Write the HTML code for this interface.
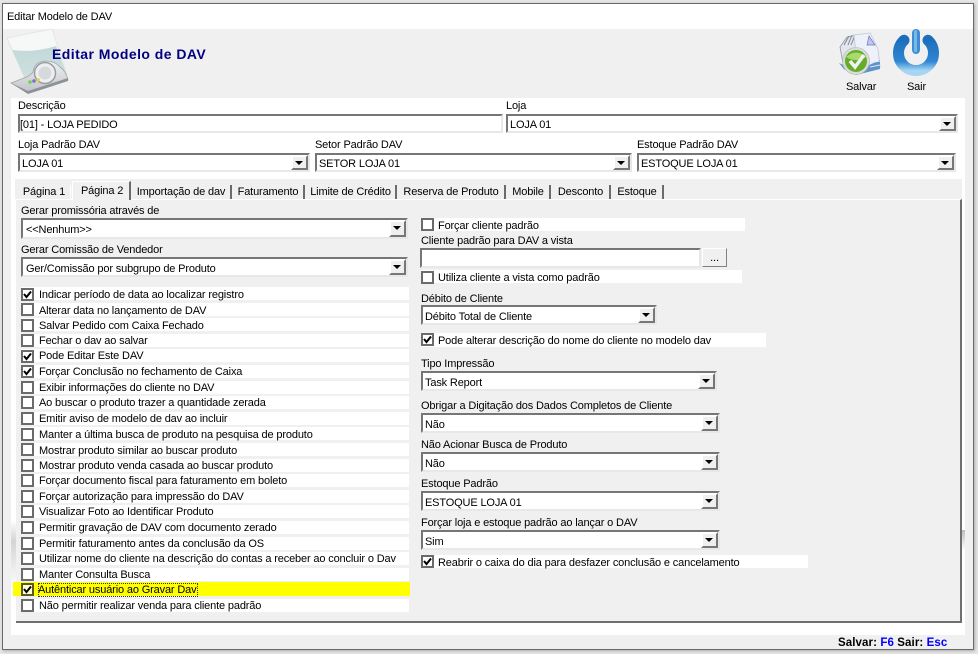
<!DOCTYPE html>
<html><head><meta charset="utf-8"><title>Editar Modelo de DAV</title>
<style>
html,body{margin:0;padding:0;background:#e4e4e4}
#w{position:relative;width:978px;height:654px;overflow:hidden;font:11px/14px "Liberation Sans",sans-serif;letter-spacing:-.15px;color:#000;background:#e6e6e6}
#w div,#w span,#w svg{position:absolute;box-sizing:border-box;white-space:nowrap}
.t{height:14px;margin-top:1px}
.r{background:#fff;height:13px;width:388px;left:21px}
.c{left:21px;width:13px;height:13px;background:#fff;border:2px solid #6b6b6b}
.c svg{left:0;top:0}
.l{left:39px}
.e{background:#fff;border:2px solid;border-color:#767676 #e8e8e8 #e8e8e8 #767676}
.e span{left:2px;top:2px}
.b{width:17px;background:#efefef;border:2px solid;border-color:#fff #777 #777 #fff;top:0;bottom:0;right:0}
.b:after{content:"";position:absolute;left:2px;top:4px;border:4px solid transparent;border-bottom:0;border-top:4px solid #000;border-left-width:4.5px;border-right-width:4.5px}
.tab{top:185px;height:14px;border-right:2px solid #6b6b6b;text-align:center;line-height:14px}
</style></head><body>
<div id="w">
<div style="left:2px;top:3px;width:972px;height:647px;background:#f0f0f0;border:1px solid #696969;box-shadow:1px 1px 3px #aaa"></div>
<div style="left:3px;top:4px;width:970px;height:25px;background:#fff"></div>
<div class="t" style="left:7px;top:9px">Editar Modelo de DAV</div>

<svg style="left:0;top:25px" width="80" height="75" viewBox="0 0 80 75">
<defs><linearGradient id="tl" x1="0" y1="0" x2="0" y2="1"><stop offset="0" stop-color="#c2d9d9"/><stop offset="1" stop-color="#cfe0e0"/></linearGradient>
<linearGradient id="bs" x1="0" y1="0" x2="0" y2="1"><stop offset="0" stop-color="#f0f1f2"/><stop offset="1" stop-color="#c0c3c6"/></linearGradient></defs>
<path d="M7 13 52 4 67 50 26 56Z" fill="#f6f8f8" stroke="#dfe4e4" stroke-width=".8"/>
<path d="M12 25Q34 28 56 21L67 50 26 56Z" fill="url(#tl)"/>
<path d="M11 58 24 53Q30 51 33 47 34 37 45 36 55 36 60 42 66 46 68 55 50 62 28 68Z" fill="url(#bs)" stroke="#a2a6aa" stroke-width=".8"/>
<path d="M11 58 28 66 68 53 68 56 28 69Z" fill="#8e9296"/>
<circle cx="45" cy="48" r="10.500" fill="#eceeef" stroke="#9a9ea2" stroke-width="1.500"/>
<circle cx="45" cy="48" r="6.500" fill="#d6d9db"/>
<circle cx="30" cy="57" r="1.800" fill="#6fcf5a"/><circle cx="34" cy="56" r="1.800" fill="#7073cc"/><circle cx="38" cy="55" r="1.800" fill="#e0d040"/>
</svg>
<div style="left:52px;top:46px;font:bold 14px/16px 'Liberation Sans',sans-serif;color:#000080;letter-spacing:.45px">Editar Modelo de DAV</div>

<svg style="left:830px;top:25px" width="55" height="55" viewBox="0 0 55 55">
<path d="M10 22 17 12 28 10 30 38 14 44Z" fill="#e3e6ec" stroke="#8f98a8" stroke-width=".8"/>
<path d="M14 20 19 11M18 20 22 10M21 20 25 10" stroke="#7d8694" stroke-width="1"/>
<path d="M24 10 40 8 48 24 50 42 28 46Z" fill="#eef1f9" stroke="#bcc4d8" stroke-width=".8"/>
<path d="M39 11 45 20 37 20Z" fill="#c2c6ec" stroke="#6f74c4" stroke-width=".7"/>
<path d="M9 38 14 44 26 50 50 44 50 35 48 36 26 46Z" fill="#5c93c9"/>
<path d="M40 38 50 36M40 42 50 40" stroke="#dfe8f4" stroke-width="1"/>
<circle cx="26" cy="36" r="13.500" fill="#d9dbd9" stroke="#b2b5b2" stroke-width=".6"/>
<circle cx="26" cy="36" r="11" fill="#64ad2a"/>
<path d="M16 32Q26 23 36 32 26 38 16 32Z" fill="#a9da6c"/>
<path d="M20 36 25 42 34 30" fill="none" stroke="#f2f2f2" stroke-width="3.500"/>
</svg>
<div class="t" style="left:846px;top:79px">Salvar</div>

<svg style="left:890px;top:26px" width="52" height="54" viewBox="0 0 52 54">
<defs><linearGradient id="p" x1="0" y1="0" x2="0" y2="1"><stop offset="0" stop-color="#1c6fbc"/><stop offset=".7" stop-color="#2f86d2"/><stop offset="1" stop-color="#a6d6f4"/></linearGradient></defs>
<path d="M14 14.300A17.500 17.500 0 1 0 38 14.300" fill="none" stroke="url(#p)" stroke-width="11" stroke-linecap="round"/>
<rect x="22" y="3" width="8" height="25" rx="4" fill="#3d8ed4"/>
<rect x="24" y="4" width="3" height="22" rx="1.500" fill="#7ab7e7"/>
</svg>
<div class="t" style="left:907px;top:79px">Sair</div>

<div style="left:11px;top:98px;width:954px;height:537px;background:#fff"></div>
<div style="left:962px;top:530px;width:3px;height:20px;background:linear-gradient(#bcbcbc,#fff)"></div>
<div style="left:11px;top:520px;width:5px;height:70px;background:linear-gradient(#fff,#d4d4d4 30%,#fff)"></div>

<div class="t" style="left:18px;top:98px">Descrição</div>
<div class="e" style="left:18px;top:114px;width:485px;height:19px"><span style="left:0">[01] - LOJA PEDIDO</span></div>
<div class="t" style="left:506px;top:98px">Loja</div>
<div class="e" style="left:506px;top:114px;width:452px;height:19px"><span>LOJA 01</span><div class="b"></div></div>

<div class="t" style="left:18px;top:137px">Loja Padrão DAV</div>
<div class="e" style="left:18px;top:153px;width:292px;height:19px"><span>LOJA 01</span><div class="b"></div></div>
<div class="t" style="left:315px;top:137px">Setor Padrão DAV</div>
<div class="e" style="left:315px;top:153px;width:317px;height:19px"><span>SETOR LOJA 01</span><div class="b"></div></div>
<div class="t" style="left:637px;top:137px">Estoque Padrão DAV</div>
<div class="e" style="left:637px;top:153px;width:319px;height:19px"><span>ESTOQUE LOJA 01</span><div class="b"></div></div>

<div style="left:15px;top:179px;width:947px;height:20px;background:#f0f0f0"></div>
<div style="left:16px;top:199px;width:946px;height:424px;background:#f0f0f0;border-top:1px solid #fff;border-right:2px solid #6f6f6f;border-bottom:2px solid #6f6f6f"></div>
<div style="left:72px;top:181px;width:59px;height:19px;background:#f0f0f0;border-left:1px solid #fff;border-top:1px solid #fff;border-right:2px solid #6b6b6b"></div>

<div class="tab" style="left:18px;width:53px;border-right:1px solid #fff">Página 1</div>
<div class="t" style="left:81px;top:183px">Página 2</div>
<div class="tab" style="left:132px;width:100px">Importação de dav</div>
<div class="tab" style="left:233px;width:72px">Faturamento</div>
<div class="tab" style="left:306px;width:91px">Limite de Crédito</div>
<div class="tab" style="left:398px;width:108px">Reserva de Produto</div>
<div class="tab" style="left:507px;width:44px">Mobile</div>
<div class="tab" style="left:552px;width:59px">Desconto</div>
<div class="tab" style="left:612px;width:52px">Estoque</div>

<div class="t" style="left:21px;top:203px">Gerar promissória através de</div>
<div class="e" style="left:21px;top:218px;width:387px;height:21px"><span style="left:3px;top:3px">&lt;&lt;Nenhum&gt;&gt;</span><div class="b"></div></div>
<div class="t" style="left:21px;top:242px">Gerar Comissão de Vendedor</div>
<div class="e" style="left:21px;top:257px;width:387px;height:20px"><span style="left:3px;top:3px">Ger/Comissão por subgrupo de Produto</span><div class="b"></div></div>

<div class="r" style="top:287px"></div><div class="c" style="top:288px"><svg width="9" height="9"><path d="M1 4 3.500 7 8 1.500" fill="none" stroke="#000" stroke-width="2"/></svg></div><div class="t l" style="top:287px">Indicar período de data ao localizar registro</div>
<div class="r" style="top:303px"></div><div class="c" style="top:303px"></div><div class="t l" style="top:303px">Alterar data no lançamento de DAV</div>
<div class="r" style="top:318px"></div><div class="c" style="top:319px"></div><div class="t l" style="top:318px">Salvar Pedido com Caixa Fechado</div>
<div class="r" style="top:334px"></div><div class="c" style="top:334px"></div><div class="t l" style="top:333px">Fechar o dav ao salvar</div>
<div class="r" style="top:349px"></div><div class="c" style="top:350px"><svg width="9" height="9"><path d="M1 4 3.500 7 8 1.500" fill="none" stroke="#000" stroke-width="2"/></svg></div><div class="t l" style="top:348px">Pode Editar Este DAV</div>
<div class="r" style="top:365px"></div><div class="c" style="top:365px"><svg width="9" height="9"><path d="M1 4 3.500 7 8 1.500" fill="none" stroke="#000" stroke-width="2"/></svg></div><div class="t l" style="top:364px">Forçar Conclusão no fechamento de Caixa</div>
<div class="r" style="top:381px"></div><div class="c" style="top:381px"></div><div class="t l" style="top:380px">Exibir informações do cliente no DAV</div>
<div class="r" style="top:396px"></div><div class="c" style="top:396px"></div><div class="t l" style="top:395px">Ao buscar o produto trazer a quantidade zerada</div>
<div class="r" style="top:412px"></div><div class="c" style="top:412px"></div><div class="t l" style="top:411px">Emitir aviso de modelo de dav ao incluir</div>
<div class="r" style="top:427px"></div><div class="c" style="top:428px"></div><div class="t l" style="top:427px">Manter a última busca de produto na pesquisa de produto</div>
<div class="r" style="top:443px"></div><div class="c" style="top:443px"></div><div class="t l" style="top:443px">Mostrar produto similar ao buscar produto</div>
<div class="r" style="top:459px"></div><div class="c" style="top:459px"></div><div class="t l" style="top:458px">Mostrar produto venda casada ao buscar produto</div>
<div class="r" style="top:474px"></div><div class="c" style="top:474px"></div><div class="t l" style="top:473px">Forçar documento fiscal para faturamento em boleto</div>
<div class="r" style="top:490px"></div><div class="c" style="top:490px"></div><div class="t l" style="top:489px">Forçar autorização para impressão do DAV</div>
<div class="r" style="top:505px"></div><div class="c" style="top:505px"></div><div class="t l" style="top:504px">Visualizar Foto ao Identificar Produto</div>
<div class="r" style="top:521px"></div><div class="c" style="top:521px"></div><div class="t l" style="top:520px">Permitir gravação de DAV com documento zerado</div>
<div class="r" style="top:537px"></div><div class="c" style="top:537px"></div><div class="t l" style="top:536px">Permitir faturamento antes da conclusão da OS</div>
<div class="r" style="top:552px"></div><div class="c" style="top:552px"></div><div class="t l" style="top:551px">Utilizar nome do cliente na descrição do contas a receber ao concluir o Dav</div>
<div class="r" style="top:568px"></div><div class="c" style="top:568px"></div><div class="t l" style="top:567px">Manter Consulta Busca</div>
<div class="r" style="top:582px;left:13px;width:397px;height:14px;background:#ff0"></div><div class="c" style="top:583px;background:#ffffe0;border-color:#5a5a20"><svg width="9" height="9"><path d="M1 4 3.500 7 8 1.500" fill="none" stroke="#000" stroke-width="2"/></svg></div><div class="t l" style="top:582px;left:38px;outline:1px dotted #333;outline-offset:-1px;width:160px">Autênticar usuário ao Gravar Dav</div>
<div class="r" style="top:599px"></div><div class="c" style="top:599px"></div><div class="t l" style="top:598px">Não permitir realizar venda para cliente padrão</div>

<div class="r" style="left:421px;top:218px;width:324px"></div><div class="c" style="left:421px;top:218px"></div><div class="t" style="left:438px;top:218px">Forçar cliente padrão</div>
<div class="t" style="left:421px;top:233px">Cliente padrão para DAV a vista</div>
<div class="e" style="left:420px;top:248px;width:281px;height:20px"></div>
<div style="left:702px;top:248px;width:25px;height:19px;background:#f0f0f0;border:1px solid;border-color:#fff #808080 #808080 #fff;text-align:center;line-height:19px;font-size:11px">...</div>
<div class="r" style="left:421px;top:270px;width:321px"></div><div class="c" style="left:421px;top:271px"></div><div class="t" style="left:438px;top:270px">Utiliza cliente a vista como padrão</div>
<div class="t" style="left:421px;top:291px">Débito de Cliente</div>
<div class="e" style="left:421px;top:305px;width:236px;height:20px"><span style="top:3px">Débito Total de Cliente</span><div class="b"></div></div>
<div class="r" style="left:421px;top:333px;width:345px;height:14px"></div><div class="c" style="left:421px;top:333px"><svg width="9" height="9"><path d="M1 4 3.500 7 8 1.500" fill="none" stroke="#000" stroke-width="2"/></svg></div><div class="t" style="left:438px;top:333px">Pode alterar descrição do nome do cliente no modelo dav</div>
<div class="t" style="left:421px;top:356px">Tipo Impressão</div>
<div class="e" style="left:421px;top:371px;width:296px;height:20px"><span style="top:3px">Task Report</span><div class="b"></div></div>
<div class="t" style="left:421px;top:398px">Obrigar a Digitação dos Dados Completos de Cliente</div>
<div class="e" style="left:421px;top:413px;width:299px;height:20px"><span style="top:3px">Não</span><div class="b"></div></div>
<div class="t" style="left:421px;top:437px">Não Acionar Busca de Produto</div>
<div class="e" style="left:421px;top:452px;width:299px;height:20px"><span style="top:3px">Não</span><div class="b"></div></div>
<div class="t" style="left:421px;top:476px">Estoque Padrão</div>
<div class="e" style="left:421px;top:491px;width:299px;height:20px"><span style="top:3px">ESTOQUE LOJA 01</span><div class="b"></div></div>
<div class="t" style="left:421px;top:515px">Forçar loja e estoque padrão ao lançar o DAV</div>
<div class="e" style="left:421px;top:530px;width:299px;height:20px"><span style="top:3px">Sim</span><div class="b"></div></div>
<div class="r" style="left:421px;top:555px;width:387px"></div><div class="c" style="left:421px;top:555px"><svg width="9" height="9"><path d="M1 4 3.500 7 8 1.500" fill="none" stroke="#000" stroke-width="2"/></svg></div><div class="t" style="left:438px;top:555px">Reabrir o caixa do dia para desfazer conclusão e cancelamento</div>

<div class="t" style="left:838px;top:635px;font-weight:bold;font-size:11.5px;letter-spacing:.1px">Salvar: <span style="position:static;color:#00f">F6</span> Sair: <span style="position:static;color:#00f">Esc</span></div>
</div>
</body></html>
